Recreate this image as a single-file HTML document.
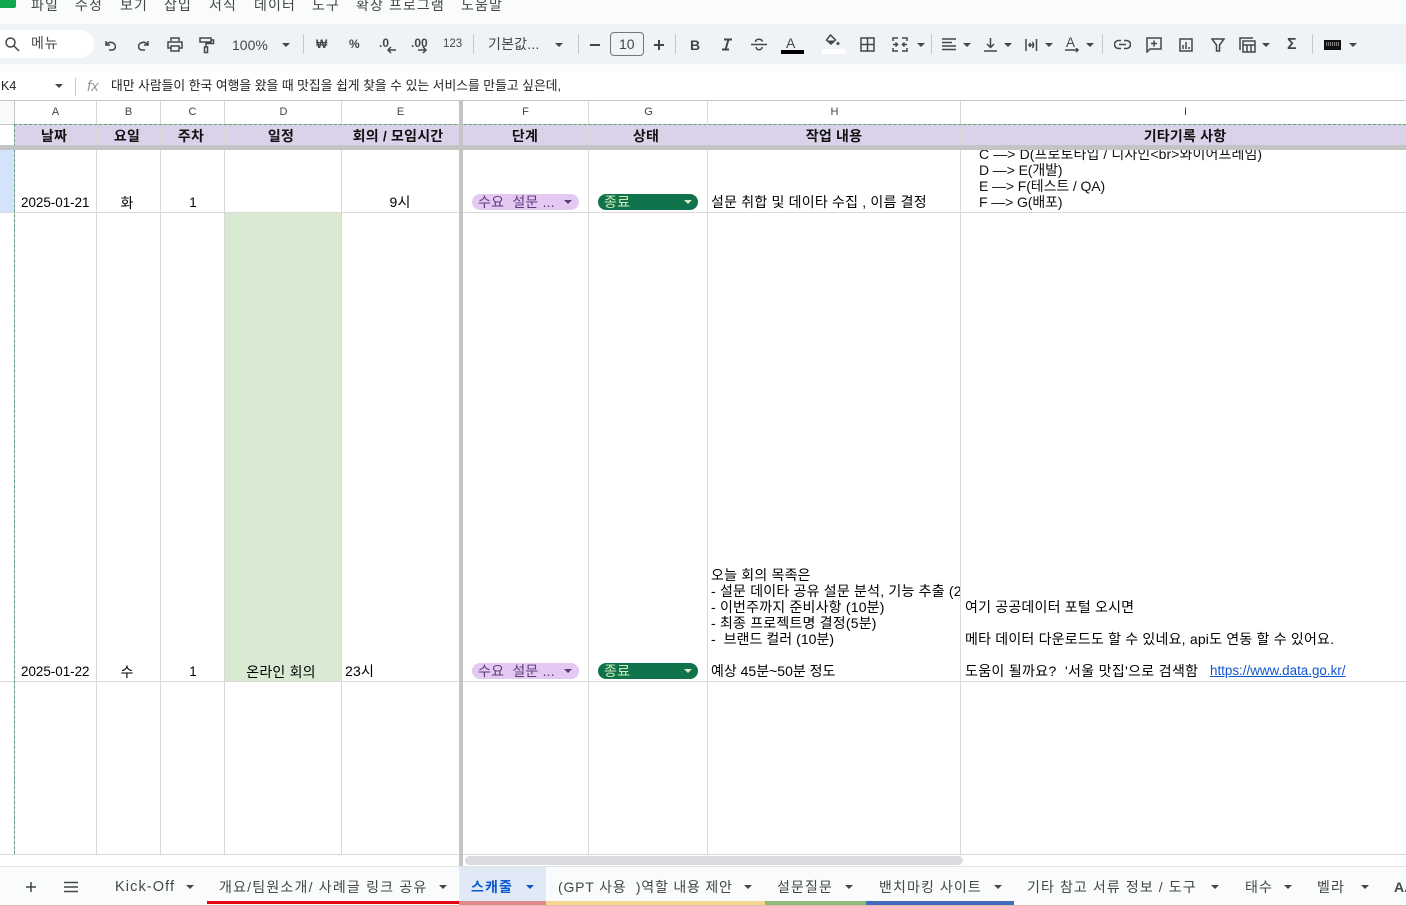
<!DOCTYPE html>
<html lang="ko"><head><meta charset="utf-8"><title>스캐줄</title>
<style>
html,body{margin:0;padding:0;background:#fff}
body{width:1406px;height:906px;position:relative;overflow:hidden;font-family:"Liberation Sans","Noto Sans CJK KR",sans-serif;font-size:14px;letter-spacing:.2px;color:#000}
div,span,a,svg{position:absolute}
.t{white-space:pre;line-height:16px}
.n{font-size:13.4px;letter-spacing:0}
.m{font-size:14px;letter-spacing:1.1px;color:#444746;top:-3px}
.c{transform:translateX(-50%)}
.l{background:#d9d9d9;width:1px}
.ch{top:105px;font-size:11px;letter-spacing:0;color:#444;line-height:14px}
.hd{top:127px;font-size:14px;font-weight:700;line-height:18px;color:#111}
.sep{width:1px;height:20px;top:34px;background:#c7c7c7}
.ar{width:0;height:0;border-left:4px solid transparent;border-right:4px solid transparent;border-top:4px solid #444746}
.tb{color:#444746;font-size:12.5px;letter-spacing:0;white-space:pre;line-height:16px}
svg{fill:none;stroke:#444746;stroke-width:1.5}
.tab{top:879px;font-size:14px;letter-spacing:1.1px;color:#444746;white-space:pre;line-height:17px}
.pill{height:16px;border-radius:8px}
.i{left:18px;font-size:14px;letter-spacing:.1px;color:#111}
</style></head><body>
<div style="left:0;top:0;width:1406px;height:100px;background:#f9fbfd"></div>
<div style="left:0;top:0;width:16px;height:8px;background:#12a84f;border-radius:0 0 2px 0"></div>
<span class="t m" style="left:31px">파일</span><span class="t m" style="left:75px">수정</span><span class="t m" style="left:120px">보기</span><span class="t m" style="left:164px">삽입</span><span class="t m" style="left:209px">서식</span><span class="t m" style="left:254px">데이터</span><span class="t m" style="left:312px">도구</span><span class="t m" style="left:356px">확장 프로그램</span><span class="t m" style="left:461px">도움말</span>

<div style="left:0;top:24px;width:1406px;height:40px;background:#eff3f8"></div>
<div style="left:-10px;top:30px;width:104px;height:28px;border-radius:14px;background:#fff"></div>
<svg style="left:4px;top:36px" width="16" height="16" viewBox="0 0 16 16"><circle cx="6.5" cy="6.5" r="4.5"/><path d="M10 10l5 5"/></svg>
<span class="tb" style="left:31px;top:35px;font-size:14px;letter-spacing:.9px">메뉴</span>
<svg style="left:103px;top:37px" width="16" height="16" viewBox="0 0 16 16"><path d="M3 4v4h4M3.500 7.500C5 5.500 7 5 9 5.500c2.500.6 3.800 2.500 3.300 5-.4 1.500-1.800 2.500-3.800 2.500H6"/></svg>
<svg style="left:135px;top:37px" width="16" height="16" viewBox="0 0 16 16"><path d="M13 4v4H9M12.500 7.500C11 5.500 9 5 7 5.500c-2.500.6-3.800 2.500-3.300 5 .4 1.500 1.800 2.500 3.800 2.500H10"/></svg>
<svg style="left:166px;top:36px" width="18" height="17" viewBox="0 0 18 17"><path d="M5 5V2h8v3M5 12H2V6h14v6h-3M5 10h8v5H5z"/></svg>
<svg style="left:198px;top:36px" width="17" height="18" viewBox="0 0 17 18"><path d="M2 2h11v4H2zM13 4h2.500v3.500H8v3.500M6.500 11h3v5.500h-3z"/></svg>
<span class="tb" style="left:232px;top:37px;font-size:14px">100%</span><div class="ar" style="left:282px;top:43px"></div>
<div class="sep" style="left:303px"></div>
<span class="tb" style="left:316px;top:36px;font-weight:700;font-size:12px">₩</span>
<span class="tb" style="left:349px;top:36px;font-size:12px;font-weight:700">%</span>
<span class="tb" style="left:379px;top:35px;font-size:12px;font-weight:700">.0</span><svg style="left:386px;top:46px" width="11" height="8" viewBox="0 0 11 8"><path d="M10 4H2M5 1L2 4l3 3"/></svg>
<span class="tb" style="left:411px;top:35px;font-size:12px;font-weight:700">.00</span><svg style="left:417px;top:46px" width="11" height="8" viewBox="0 0 11 8"><path d="M1 4h8M6 1l3 3-3 3"/></svg>
<span class="tb" style="left:443px;top:36px;font-size:11.5px">123</span>
<div class="sep" style="left:473px"></div>
<span class="tb" style="left:488px;top:36px;font-size:14px;letter-spacing:.2px">기본값...</span><div class="ar" style="left:555px;top:43px"></div>
<div class="sep" style="left:578px"></div>
<div style="left:590px;top:44px;width:10px;height:2px;background:#444746"></div>
<div style="left:610px;top:32px;width:32px;height:22px;border:1px solid #747775;border-radius:4px"></div>
<span class="tb" style="left:619px;top:36px;font-size:14px">10</span>
<svg style="left:653px;top:39px" width="12" height="12" viewBox="0 0 12 12"><path d="M6 1v10M1 6h10" stroke-width="2"/></svg>
<div class="sep" style="left:675px"></div>
<span class="tb" style="left:690px;top:37px;font-size:14px;font-weight:700">B</span>
<svg style="left:721px;top:38px" width="12" height="13" viewBox="0 0 12 13"><path d="M3 1.500h8M1 11.500h7M7.500 1.500L4.500 11.500" stroke-width="2"/></svg>
<svg style="left:751px;top:38px" width="16" height="13" viewBox="0 0 16 13"><path d="M0 6.500h16M4.500 4C4.500 2 6 1.200 8 1.200S11 2 11.500 3.500M5 9c.3 1.800 1.500 2.800 3 2.800s3-1 3-2.800"/></svg>
<span class="tb" style="left:786px;top:35px;font-size:14px">A</span><div style="left:781px;top:50px;width:23px;height:4px;background:#000"></div>
<svg style="left:825px;top:33px" width="17" height="15" viewBox="0 0 17 15"><path d="M5.500 2l5 5-4.500 4-4.500-4z"/><path d="M2 7.500h8l-4 3.500z" fill="#444746" stroke="none"/><circle cx="13" cy="10.500" r="1.500" fill="#444746" stroke="none"/></svg><div style="left:822px;top:49px;width:23px;height:5px;background:#fff"></div>
<svg style="left:860px;top:37px" width="15" height="15" viewBox="0 0 15 15"><path d="M1 1h13v13H1zM7.500 1v13M1 7.500h13"/></svg>
<svg style="left:892px;top:37px" width="16" height="15" viewBox="0 0 16 15"><path d="M6 1H1v3M1 11v3h5M10 1h5v3M15 11v3h-5M1 7.500h5M3.500 5.500l2 2-2 2M15 7.500h-5M12.500 5.500l-2 2 2 2"/></svg><div class="ar" style="left:917px;top:43px"></div>
<div class="sep" style="left:931px"></div>
<svg style="left:942px;top:38px" width="15" height="14" viewBox="0 0 15 14"><path d="M0 1h14M0 4.500h10M0 8h14M0 11.500h14"/></svg><div class="ar" style="left:963px;top:43px"></div>
<svg style="left:984px;top:38px" width="13" height="14" viewBox="0 0 13 14"><path d="M6.500 0v9M3 6l3.500 3.500L10 6M0 13h13"/></svg><div class="ar" style="left:1004px;top:43px"></div>
<svg style="left:1025px;top:38px" width="13" height="14" viewBox="0 0 13 14"><path d="M1 1v12M11.500 1v12M4 7h5M7 4.500c2 0 2 5 0 5M5.500 5L4 7l1.500 2"/></svg><div class="ar" style="left:1045px;top:43px"></div>
<span class="tb" style="left:1066px;top:35px;font-size:13.5px">A</span><svg style="left:1065px;top:48px" width="15" height="5" viewBox="0 0 15 5"><path d="M0 2h13M11 0l2 2-2 2"/></svg><div class="ar" style="left:1086px;top:43px"></div>
<div class="sep" style="left:1102px"></div>
<svg style="left:1114px;top:39px" width="17" height="11" viewBox="0 0 17 11"><path d="M7 1.500H4.500a4 4 0 000 8H7M10 1.500h2.500a4 4 0 010 8H10M5 5.500h7"/></svg>
<svg style="left:1146px;top:37px" width="16" height="16" viewBox="0 0 16 16"><path d="M1 1h14v11H4l-3 3zM8 3.500v6M5 6.500h6"/></svg>
<svg style="left:1179px;top:38px" width="14" height="14" viewBox="0 0 14 14"><path d="M1 1h12v12H1zM4 7v4M7 4v7M10 9v2"/></svg>
<svg style="left:1211px;top:38px" width="14" height="14" viewBox="0 0 14 14"><path d="M1 1h12L8.500 7v6h-3V7z"/></svg>
<svg style="left:1239px;top:37px" width="17" height="16" viewBox="0 0 17 16"><path d="M1 13V1h13M4 4h12v11H4zM4 8h12M8 8v7M12 8v7"/></svg><div class="ar" style="left:1262px;top:43px"></div>
<span class="tb" style="left:1287px;top:37px;font-size:16px;font-weight:700">Σ</span>
<div class="sep" style="left:1312px"></div>
<div style="left:1324px;top:40px;width:17px;height:10px;background:#111"></div><div style="left:1326px;top:42px;width:13px;height:4px;background:repeating-linear-gradient(90deg,#777 0 1px,#222 1px 2px)"></div><div class="ar" style="left:1349px;top:43px"></div>

<div style="left:0;top:72px;width:1406px;height:28px;background:#fff"></div>
<span class="t" style="left:1px;top:78px;font-size:12.5px;letter-spacing:0;color:#222">K4</span><div class="ar" style="left:55px;top:84px"></div>
<div style="left:75px;top:78px;width:1px;height:18px;background:#c7c7c7"></div>
<span class="t" style="left:87px;top:79px;font-family:'Liberation Sans',sans-serif;font-style:italic;font-size:15px;letter-spacing:0;color:#999">fx</span>
<span class="t" style="left:111px;top:78px;font-size:12.8px;letter-spacing:0;color:#222">대만 사람들이 한국 여행을 왔을 때 맛집을 쉽게 찾을 수 있는 서비스를 만들고 싶은데,</span>

<div style="left:0;top:100px;width:1406px;height:1px;background:#c4c7c5"></div>
<div style="left:0;top:101px;width:14px;height:24px;background:#f8f9fa"></div>
<div style="left:0;top:150px;width:14px;height:62px;background:#d3e3fd"></div>
<div style="left:0;top:124px;width:1406px;height:1px;background:#c7c7c7"></div>

<div style="left:15px;top:125px;width:1391px;height:20px;background:#d9d2e9"></div>
<div style="left:224px;top:213px;width:117px;height:468px;background:#d9ead3"></div>

<div class="l" style="left:14px;top:101px;height:753px;background:#c7c7c7"></div>
<div class="l" style="left:96px;top:101px;height:753px"></div>
<div class="l" style="left:160px;top:101px;height:753px"></div>
<div class="l" style="left:224px;top:101px;height:753px"></div>
<div class="l" style="left:341px;top:101px;height:753px"></div>
<div class="l" style="left:588px;top:101px;height:753px"></div>
<div class="l" style="left:707px;top:101px;height:753px"></div>
<div class="l" style="left:960px;top:101px;height:753px"></div>

<div style="left:0;top:212px;width:1406px;height:1px;background:#d9d9d9"></div>
<div style="left:0;top:681px;width:1406px;height:1px;background:#d9d9d9"></div>
<div style="left:0;top:854px;width:1406px;height:1px;background:#d9d9d9"></div>

<div style="left:14px;top:124px;width:1392px;height:0;border-top:1px dashed #5f9e7e"></div>
<div style="left:14px;top:124px;height:730px;width:0;border-left:1px dashed #5f9e7e"></div>

<div style="left:0;top:145px;width:1406px;height:5px;background:#c4c4c4"></div>
<div style="left:459px;top:101px;width:4px;height:765px;background:#c4c4c4"></div>

<span class="t ch c" style="left:55.5px">A</span><span class="t ch c" style="left:128.5px">B</span><span class="t ch c" style="left:192.5px">C</span><span class="t ch c" style="left:283.5px">D</span><span class="t ch c" style="left:400.5px">E</span><span class="t ch c" style="left:525.5px">F</span><span class="t ch c" style="left:648.5px">G</span><span class="t ch c" style="left:834.5px">H</span><span class="t ch c" style="left:1185.5px">I</span>

<span class="t hd c" style="left:54px">날짜</span><span class="t hd c" style="left:127px">요일</span><span class="t hd c" style="left:191px">주차</span><span class="t hd c" style="left:281px">일정</span><span class="t hd c" style="left:398px">회의 / 모임시간</span><span class="t hd c" style="left:525px">단계</span><span class="t hd c" style="left:646px">상태</span><span class="t hd c" style="left:834px">작업 내용</span><span class="t hd c" style="left:1185px">기타기록 사항</span>

<div style="left:961px;top:150px;width:445px;height:62px;overflow:hidden">
<span class="t i" style="top:-4px">C —&gt; D(프로토타입 / 디자인&lt;br&gt;와이어프레임)</span>
<span class="t i" style="top:12px;letter-spacing:-.1px">D —&gt; E(개발)</span>
<span class="t i" style="top:28px;letter-spacing:-.1px">E —&gt; F(테스트 / QA)</span>
<span class="t i" style="top:44px;letter-spacing:-.1px">F —&gt; G(배포)</span>
</div>

<span class="t n" style="left:21px;top:195px">2025-01-21</span><span class="t c" style="left:127px;top:195px">화</span><span class="t n c" style="left:193px;top:195px">1</span><span class="t c" style="left:400px;top:194px">9시</span>
<div class="pill" style="left:472px;top:194px;width:107px;background:#e4c9f3"></div><span class="t" style="left:478px;top:194px;color:#5e3a78">수요  설문 ...</span><div class="ar" style="left:564px;top:200px;border-top-color:#5e3a78"></div>
<div class="pill" style="left:598px;top:194px;width:100px;background:#11734b"></div><span class="t" style="left:604px;top:194px;color:#d4edbc">종료</span><div class="ar" style="left:684px;top:200px;border-top-color:#d4edbc"></div>
<span class="t" style="left:711px;top:194px">설문 취합 및 데이타 수집 , 이름 결정</span>

<span class="t n" style="left:21px;top:664px">2025-01-22</span><span class="t c" style="left:127px;top:664px">수</span><span class="t n c" style="left:193px;top:664px">1</span><span class="t c" style="left:281px;top:664px">온라인 회의</span><span class="t" style="left:345px;top:663px">23시</span>
<div class="pill" style="left:472px;top:663px;width:107px;background:#e4c9f3"></div><span class="t" style="left:478px;top:663px;color:#5e3a78">수요  설문 ...</span><div class="ar" style="left:564px;top:669px;border-top-color:#5e3a78"></div>
<div class="pill" style="left:598px;top:663px;width:100px;background:#11734b"></div><span class="t" style="left:604px;top:663px;color:#d4edbc">종료</span><div class="ar" style="left:684px;top:669px;border-top-color:#d4edbc"></div>

<div style="left:708px;top:560px;width:252px;height:121px;overflow:hidden">
<span class="t" style="left:3px;top:7px">오늘 회의 목족은</span>
<span class="t" style="left:3px;top:23px">- 설문 데이타 공유 설문 분석, 기능 추출 (20분)</span>
<span class="t" style="left:3px;top:39px">- 이번주까지 준비사항 (10분)</span>
<span class="t" style="left:3px;top:55px">- 최종 프로젝트명 결정(5분)</span>
<span class="t" style="left:3px;top:71px;letter-spacing:.05px">-  브랜드 컬러 (10분)</span>
<span class="t" style="left:3px;top:103px;letter-spacing:0">예상 45분~50분 정도</span>
</div>
<span class="t" style="left:965px;top:599px">여기 공공데이터 포털 오시면</span>
<span class="t" style="left:965px;top:631px">메타 데이터 다운로드도 할 수 있네요, api도 연동 할 수 있어요.</span>
<span class="t" style="left:965px;top:663px;letter-spacing:.33px">도움이 될까요?  '서울 맛집'으로 검색함</span>
<span class="t n" style="left:1210px;top:663px;color:#1155cc;text-decoration:underline">https://www.data.go.kr/</span>

<div style="left:463px;top:855px;width:943px;height:11px;background:#fff"></div>
<div style="left:465px;top:856px;width:498px;height:9px;border-radius:5px;background:#dadce0"></div>

<div style="left:0;top:866px;width:1406px;height:40px;background:#f9fbfd;border-top:1px solid #e3e3e3;box-sizing:border-box"></div>
<div style="left:459px;top:867px;width:87px;height:35px;background:#e1e9f7"></div>
<div style="left:0;top:905px;width:1406px;height:1px;background:#e2b9ae"></div>
<div style="left:207px;top:901px;width:252px;height:3px;background:#e60012"></div>
<div style="left:459px;top:901px;width:87px;height:4px;background:#e08a8a"></div>
<div style="left:546px;top:901px;width:219px;height:4px;background:#f6d78f"></div>
<div style="left:765px;top:901px;width:101px;height:4px;background:#8fbc7a"></div>
<div style="left:866px;top:901px;width:148px;height:4px;background:#3f6cc0"></div>

<svg style="left:25px;top:881px" width="12" height="12" viewBox="0 0 12 12"><path d="M6 1v10M1 6h10"/></svg>
<svg style="left:63px;top:881px" width="16" height="12" viewBox="0 0 16 12"><path d="M1 1.500h14M1 6h14M1 10.500h14"/></svg>
<span class="tab" style="left:115px;font-size:14.5px">Kick-Off</span><div class="ar" style="left:186px;top:885px"></div>
<span class="tab" style="left:219px;letter-spacing:1.2px">개요/팀원소개/ 사례글 링크 공유</span><div class="ar" style="left:439px;top:885px"></div>
<span class="tab" style="left:471px;color:#0b57d0;font-weight:700">스캐줄</span><div class="ar" style="left:526px;top:885px;border-top-color:#0b57d0"></div>
<span class="tab" style="left:558px;letter-spacing:.8px">(GPT 사용  )역할 내용 제안</span><div class="ar" style="left:744px;top:885px"></div>
<span class="tab" style="left:777px">설문질문</span><div class="ar" style="left:845px;top:885px"></div>
<span class="tab" style="left:879px">밴치마킹 사이트</span><div class="ar" style="left:994px;top:885px"></div>
<span class="tab" style="left:1027px">기타 참고 서류 정보 / 도구</span><div class="ar" style="left:1211px;top:885px"></div>
<span class="tab" style="left:1245px">태수</span><div class="ar" style="left:1284px;top:885px"></div>
<span class="tab" style="left:1317px">벨라</span><div class="ar" style="left:1361px;top:885px"></div>
<span class="tab" style="left:1394px;font-weight:700;letter-spacing:0">A...</span>
</body></html>
